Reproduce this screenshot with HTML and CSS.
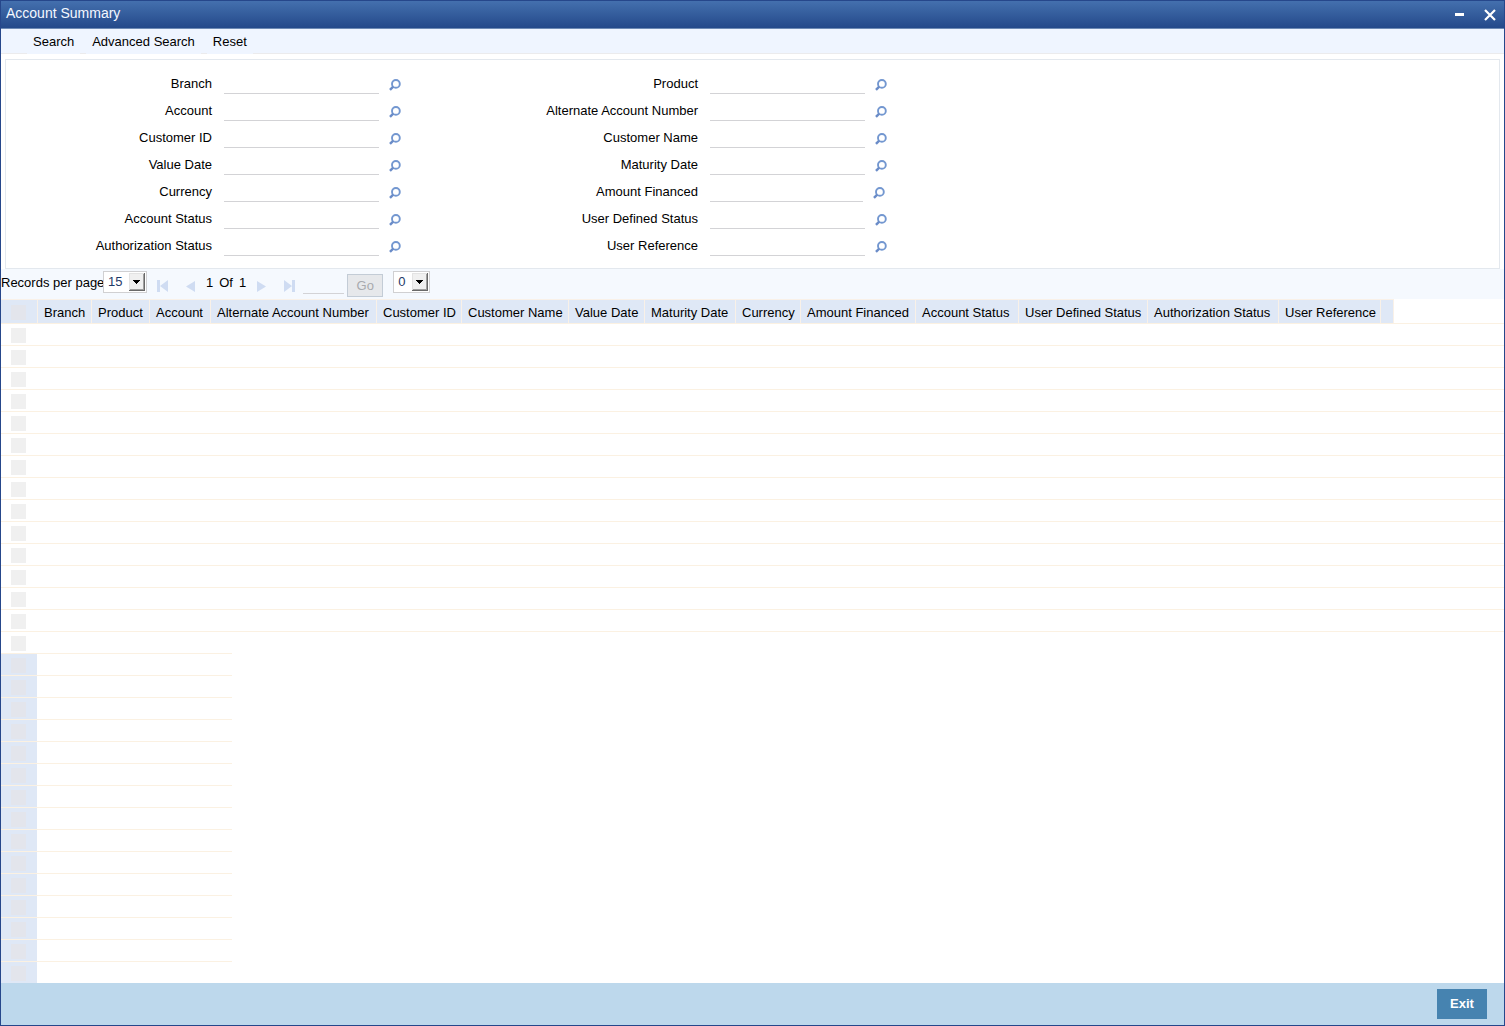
FILE: index.html
```html
<!DOCTYPE html>
<html lang="en">
<head>
<meta charset="utf-8">
<title>Account Summary</title>
<link rel="stylesheet" href="styles.css">
</head>
<body>
<svg class="defs" aria-hidden="true">
  <symbol id="lens" viewBox="0 0 12 12">
    <circle cx="6.900" cy="4.900" r="3.900" fill="none" stroke="#7397d0" stroke-width="1.900"/>
    <path d="M4.200 7.600 1 10.800" stroke="#6a8cc8" stroke-width="2.400" fill="none"/>
  </symbol>
  <symbol id="drop" viewBox="0 0 16 18">
    <path d="M0 0h16v18H0z" fill="#696969"/>
    <path d="M0 0h15v17H0z" fill="#e3e3e3"/>
    <path d="M1 1h14v16H1z" fill="#a0a0a0"/>
    <path d="M1 1h13v15H1z" fill="#f0f0f0"/>
    <path d="M4 7h7v1h-1v1H9v1H8v1H7v-1H6V9H5V8H4z" fill="#000"/>
  </symbol>
</svg>
<div class="window">
  <header class="titlebar">
    <h1 class="title">Account Summary</h1>
    <button class="winbtn" type="button" aria-label="Minimize"><svg width="9" height="12" viewBox="0 0 9 12"><path d="M0 4h9v3H0z" fill="#fff"/></svg></button>
    <button class="winbtn" type="button" aria-label="Close"><svg width="12" height="12" viewBox="0 0 12 12"><path d="M1 1l10 10M11 1L1 11" stroke="#fff" stroke-width="2.200"/></svg></button>
  </header>
  <nav class="menu">
    <button class="menuitem" type="button">Search</button>
    <button class="menuitem" type="button">Advanced Search</button>
    <button class="menuitem" type="button">Reset</button>
  </nav>
  <form class="criteria">
    <div class="column">
      <div class="field"><label for="f1">Branch</label><input id="f1" type="text"><button type="button" aria-label="Find branch"><svg><use href="#lens"/></svg></button></div>
      <div class="field"><label for="f2">Account</label><input id="f2" type="text"><button type="button" aria-label="Find account"><svg><use href="#lens"/></svg></button></div>
      <div class="field"><label for="f3">Customer ID</label><input id="f3" type="text"><button type="button" aria-label="Find customer ID"><svg><use href="#lens"/></svg></button></div>
      <div class="field"><label for="f4">Value Date</label><input id="f4" type="text"><button type="button" aria-label="Find value date"><svg><use href="#lens"/></svg></button></div>
      <div class="field"><label for="f5">Currency</label><input id="f5" type="text"><button type="button" aria-label="Find currency"><svg><use href="#lens"/></svg></button></div>
      <div class="field"><label for="f6">Account Status</label><input id="f6" type="text"><button type="button" aria-label="Find account status"><svg><use href="#lens"/></svg></button></div>
      <div class="field"><label for="f7">Authorization Status</label><input id="f7" type="text"><button type="button" aria-label="Find authorization status"><svg><use href="#lens"/></svg></button></div>
    </div>
    <div class="column">
      <div class="field"><label for="g1">Product</label><input id="g1" type="text"><button type="button" aria-label="Find product"><svg><use href="#lens"/></svg></button></div>
      <div class="field"><label for="g2">Alternate Account Number</label><input id="g2" type="text"><button type="button" aria-label="Find alternate account number"><svg><use href="#lens"/></svg></button></div>
      <div class="field"><label for="g3">Customer Name</label><input id="g3" type="text"><button type="button" aria-label="Find customer name"><svg><use href="#lens"/></svg></button></div>
      <div class="field"><label for="g4">Maturity Date</label><input id="g4" type="text"><button type="button" aria-label="Find maturity date"><svg><use href="#lens"/></svg></button></div>
      <div class="field"><label for="g5">Amount Financed</label><input id="g5" class="amount" type="text"><button type="button" aria-label="Find amount financed"><svg><use href="#lens"/></svg></button></div>
      <div class="field"><label for="g6">User Defined Status</label><input id="g6" type="text"><button type="button" aria-label="Find user defined status"><svg><use href="#lens"/></svg></button></div>
      <div class="field"><label for="g7">User Reference</label><input id="g7" type="text"><button type="button" aria-label="Find user reference"><svg><use href="#lens"/></svg></button></div>
    </div>
  </form>
  <div class="paging">
    <label class="perpage" for="perpage">Records per page</label>
    <span class="combo size"><select id="perpage"><option>15</option><option>30</option></select><svg><use href="#drop"/></svg></span>
    <button class="step" type="button" aria-label="First page"><svg width="12" height="12"><path d="M0 0h3v12H0zM11 0v12L3 6z"/></svg></button>
    <button class="step" type="button" aria-label="Previous page"><svg width="12" height="12"><path d="M10 1v11L1 6.500z"/></svg></button>
    <span class="count"><span>1</span><span>Of</span><span>1</span></span>
    <button class="step" type="button" aria-label="Next page"><svg width="12" height="12"><path d="M1 1v11l9-5.500z"/></svg></button>
    <button class="step" type="button" aria-label="Last page"><svg width="12" height="12"><path d="M8 0h3v12H8zM0 0v12l8-6z"/></svg></button>
    <input class="goto" type="text" aria-label="Page number">
    <button class="go" type="button" disabled>Go</button>
    <span class="combo lock"><select aria-label="Locked columns"><option>0</option><option>1</option></select><svg><use href="#drop"/></svg></span>
  </div>
  <main class="results">
    <table class="grid">
      <colgroup><col class="w37"><col class="w54"><col class="w58"><col class="w61"><col class="w166"><col class="w85"><col class="w107"><col class="w76"><col class="w91"><col class="w65"><col class="w115"><col class="w103"><col class="w129"><col class="w131"><col class="w102"><col class="w13"><col></colgroup>
      <thead>
        <tr><th><input type="checkbox" aria-label="Select all" disabled></th><th>Branch</th><th>Product</th><th>Account</th><th>Alternate Account Number</th><th>Customer ID</th><th>Customer Name</th><th>Value Date</th><th>Maturity Date</th><th>Currency</th><th>Amount Financed</th><th>Account Status</th><th>User Defined Status</th><th>Authorization Status</th><th>User Reference</th><th></th><td></td></tr>
      </thead>
      <tbody>
        <tr><td><input type="checkbox" aria-label="Select row 1" disabled></td><td colspan="16"></td></tr>
        <tr><td><input type="checkbox" aria-label="Select row 2" disabled></td><td colspan="16"></td></tr>
        <tr><td><input type="checkbox" aria-label="Select row 3" disabled></td><td colspan="16"></td></tr>
        <tr><td><input type="checkbox" aria-label="Select row 4" disabled></td><td colspan="16"></td></tr>
        <tr><td><input type="checkbox" aria-label="Select row 5" disabled></td><td colspan="16"></td></tr>
        <tr><td><input type="checkbox" aria-label="Select row 6" disabled></td><td colspan="16"></td></tr>
        <tr><td><input type="checkbox" aria-label="Select row 7" disabled></td><td colspan="16"></td></tr>
        <tr><td><input type="checkbox" aria-label="Select row 8" disabled></td><td colspan="16"></td></tr>
        <tr><td><input type="checkbox" aria-label="Select row 9" disabled></td><td colspan="16"></td></tr>
        <tr><td><input type="checkbox" aria-label="Select row 10" disabled></td><td colspan="16"></td></tr>
        <tr><td><input type="checkbox" aria-label="Select row 11" disabled></td><td colspan="16"></td></tr>
        <tr><td><input type="checkbox" aria-label="Select row 12" disabled></td><td colspan="16"></td></tr>
        <tr><td><input type="checkbox" aria-label="Select row 13" disabled></td><td colspan="16"></td></tr>
        <tr><td><input type="checkbox" aria-label="Select row 14" disabled></td><td colspan="16"></td></tr>
        <tr class="last"><td><input type="checkbox" aria-label="Select row 15" disabled></td><td colspan="16"></td></tr>
      </tbody>
    </table>
    <table class="grid detail">
      <colgroup><col class="w36"><col></colgroup>
      <tbody>
        <tr><td><input type="checkbox" aria-label="Select detail 1" disabled></td><td></td></tr>
        <tr><td><input type="checkbox" aria-label="Select detail 2" disabled></td><td></td></tr>
        <tr><td><input type="checkbox" aria-label="Select detail 3" disabled></td><td></td></tr>
        <tr><td><input type="checkbox" aria-label="Select detail 4" disabled></td><td></td></tr>
        <tr><td><input type="checkbox" aria-label="Select detail 5" disabled></td><td></td></tr>
        <tr><td><input type="checkbox" aria-label="Select detail 6" disabled></td><td></td></tr>
        <tr><td><input type="checkbox" aria-label="Select detail 7" disabled></td><td></td></tr>
        <tr><td><input type="checkbox" aria-label="Select detail 8" disabled></td><td></td></tr>
        <tr><td><input type="checkbox" aria-label="Select detail 9" disabled></td><td></td></tr>
        <tr><td><input type="checkbox" aria-label="Select detail 10" disabled></td><td></td></tr>
        <tr><td><input type="checkbox" aria-label="Select detail 11" disabled></td><td></td></tr>
        <tr><td><input type="checkbox" aria-label="Select detail 12" disabled></td><td></td></tr>
        <tr><td><input type="checkbox" aria-label="Select detail 13" disabled></td><td></td></tr>
        <tr><td><input type="checkbox" aria-label="Select detail 14" disabled></td><td></td></tr>
        <tr><td><input type="checkbox" aria-label="Select detail 15" disabled></td><td></td></tr>
      </tbody>
    </table>
  </main>
  <footer class="footer"><button class="exit" type="button">Exit</button></footer>
</div>
</body>
</html>
```
FILE: styles.css
```css
* { box-sizing: border-box; }
body { margin: 0; background: #fff; color: #000; font: 13px/20px "Liberation Sans", Arial, sans-serif; }
button, input, select { font: inherit; color: inherit; margin: 0; padding: 0; border: 0; border-radius: 0; background: none; outline-offset: 2px; }
svg { display: block; }
.defs { display: none; }

.window { display: flex; flex-direction: column; min-height: 100vh; border: 1px solid #26478b; }

/* title bar and menu */
.titlebar { display: flex; align-items: center; gap: 20px; height: 28px; padding: 0 8px 0 5px; background: linear-gradient(#4470ae, #24498a); border-bottom: 1px solid #6d8ab4; }
.title { flex: 1; margin: 0; padding-bottom: 3px; font-size: 14px; font-weight: 400; line-height: 20px; color: #f4f8ff; }
.menu { display: flex; gap: 6px; height: 25px; padding-left: 26px; background: #eff5ff; border-bottom: 1px solid #ebebed; }
.menuitem { height: 25px; padding: 0 6px; background: #eff5ff; white-space: nowrap; }

/* search criteria */
.criteria { display: flex; margin: 5px 4px 0; padding: 7px 0 12px; border: 1px solid #e3e8ee; }
.column { width: 486px; }
.field { display: flex; align-items: flex-end; height: 27px; }
.field label { width: 206px; margin-right: 12px; text-align: right; white-space: nowrap; }
.field input { width: 155px; height: 20px; border-bottom: 1px solid #d3d3d6; }
.field .amount { width: 153px; }
.field button { margin: 0 0 3px 10px; }
.field svg { width: 12px; height: 12px; }

/* paging bar */
.paging { display: flex; align-items: flex-start; height: 30px; background: #f5f9fe; line-height: 28px; }
.perpage { width: 102px; white-space: nowrap; }
.combo { display: grid; align-items: center; height: 22px; margin-top: 2px; line-height: 20px; background: #fff; border: 1px solid #d0d0d2; }
.combo select, .combo svg { grid-area: 1 / 1; }
.combo select { width: 100%; height: 20px; padding-left: 4px; appearance: none; color: #1f3a68; }
.combo svg { justify-self: end; width: 16px; height: 18px; margin-right: 1px; pointer-events: none; }
.size { width: 44px; margin-right: 10px; }
.lock { width: 37px; margin-left: 10px; }
.step { height: 24px; margin-top: 5px; fill: #cfdcf2; }
.step + .step { margin-left: 16px; }
.count { display: flex; gap: 6px; margin: 0 10px 0 9px; }
.goto { width: 41px; height: 20px; margin: 5px 3px 0 7px; border-bottom: 1px solid #d3d3d6; }
.go { width: 36px; height: 23px; margin-top: 5px; line-height: 20px; background: #e6e8eb; border: 1px solid #c3ccd6; color: #a8aaae; }

/* result tables */
.results { flex: 1; }
.grid { width: 100%; table-layout: fixed; border-collapse: separate; border-spacing: 0; }
.grid td, .grid th { height: 22px; padding: 1px 0 0; border-bottom: 1px solid #fbf1e2; line-height: 20px; font-weight: 400; text-align: left; white-space: nowrap; }
.grid thead th { height: 25px; padding: 2px 0 0 6px; background: #dfe8f6; border-top: 1px solid #f9f1e8; border-right: 1px solid #f9f1e8; }
.grid input { display: block; appearance: none; width: 15px; height: 15px; margin-left: 10px; background: #f0f0f0; }
.grid thead input { margin-left: 4px; background: #e3e5ec; }
.grid .last td { border-bottom-color: transparent; }
.detail { width: 231px; border-top: 1px solid #fbf1e2; margin-top: -1px; }
.detail td:first-child { background: #dfe8f6; }
.detail input { background: #e3e5ec; }
.detail tr:last-child td { height: 21px; border-bottom: 0; }
.w36 { width: 36px; }
.w37 { width: 37px; }
.w54 { width: 54px; }
.w58 { width: 58px; }
.w61 { width: 61px; }
.w166 { width: 166px; }
.w85 { width: 85px; }
.w107 { width: 107px; }
.w76 { width: 76px; }
.w91 { width: 91px; }
.w65 { width: 65px; }
.w115 { width: 115px; }
.w103 { width: 103px; }
.w129 { width: 129px; }
.w131 { width: 131px; }
.w102 { width: 102px; }
.w13 { width: 13px; }

.footer { display: flex; justify-content: flex-end; padding: 6px 17px; background: #bdd8ec; }
.exit { width: 50px; height: 30px; background: #4683b0; color: #fff; font-size: 13px; font-weight: 700; }
```
